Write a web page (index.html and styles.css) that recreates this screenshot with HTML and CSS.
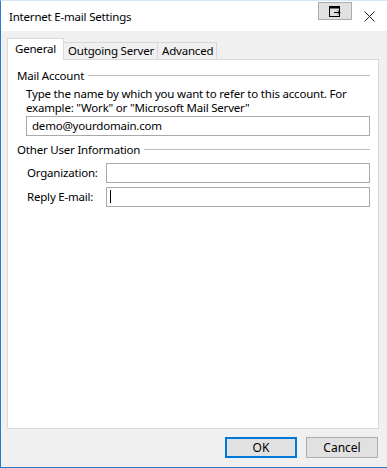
FILE: index.html
```html
<!DOCTYPE html>
<html lang="en">
<head>
    <meta charset="UTF-8">
    <title>Internet E-mail Settings</title>
    <link rel="stylesheet" href="styles.css">
</head>
<body>
    <div class="window">
        <!-- Title bar -->
        <div class="titlebar">
            <span class="title">Internet E-mail Settings</span>
            <button class="help-btn" aria-label="Help">
                <svg width="13" height="11" viewBox="0 0 13 11">
                    <rect x="0.5" y="0.5" width="10" height="10" fill="none" stroke="#000"/>
                    <rect x="0.5" y="0.5" width="10" height="2" fill="#000"/>
                    <path d="M5 6.5h6M9 4.5l2 2-2 2" fill="none" stroke="#000"/>
                </svg>
            </button>
            <span class="close">
                <svg width="11" height="11" viewBox="0 0 11 11">
                    <path d="M0.5 0.5L10.5 10.5M10.5 0.5L0.5 10.5" stroke="#222" stroke-width="1"/>
                </svg>
            </span>
        </div>

        <!-- Body -->
        <div class="content">
            <div class="tabs">
                <div class="tab active">General</div>
                <div class="tab">Outgoing Server</div>
                <div class="tab">Advanced</div>
            </div>
            <div class="panel">
                <div class="group-title"><span>Mail Account</span></div>
                <div class="group-body">
                    <p class="hint">Type the name by which you want to refer to this account. For example: "Work" or "Microsoft Mail Server"</p>
                    <div class="field wide">demo@yourdomain.com</div>
                </div>

                <div class="group-title"><span>Other User Information</span></div>
                <div class="form-grid">
                    <label>Organization:</label>
                    <div class="field"></div>
                    <label>Reply E-mail:</label>
                    <div class="field"><span class="caret"></span></div>
                </div>
            </div>
            <div class="footer">
                <button class="btn primary">OK</button>
                <button class="btn">Cancel</button>
            </div>
        </div>
    </div>
</body>
</html>
```

FILE: styles.css
```css
/* Page reset */
body {
    margin: 0;
    font-family: 'Noto Sans', 'DejaVu Sans', sans-serif;
    font-size: 11.5px;
    letter-spacing: -0.2px;
    color: #000;
    background: #fff;
}

/* Dialog frame */
.window {
    width: 387px;
    height: 468px;
    box-sizing: border-box;
    border: 1px solid #2b79c9;
    border-top-color: #d6e6f5;
    border-right: none;
    display: flex;
    flex-direction: column;
}

/* Title bar */
.titlebar {
    height: 30px;
    background: #fff;
    display: flex;
    align-items: center;
    padding-left: 8px;
}

.title {
    flex: 1;
    margin-top: 1px;
}

.help-btn {
    width: 34px;
    height: 18px;
    margin-top: -10px;
    padding: 0;
    border: 1px solid #adadad;
    background: #e1e1e1;
    display: flex;
    align-items: center;
    justify-content: center;
}

.close {
    width: 35px;
    display: flex;
    justify-content: center;
    margin-top: 1px;
}

/* Main body */
.content {
    flex: 1;
    background: #f0f0f0;
    display: flex;
    flex-direction: column;
    padding: 7px 8px 0 6px;
}

/* Tabs */
.tabs {
    display: flex;
    align-items: flex-end;
    height: 21px;
    position: relative;
    z-index: 1;
}

.tab {
    height: 17px;
    line-height: 16px;
    padding: 0 3px 0 4px;
    border: 1px solid #d9d9d9;
    border-bottom: none;
    background: #f0f0f0;
    margin-left: -1px;
    box-sizing: border-box;
}

.tab.active {
    height: 22px;
    line-height: 19px;
    background: #fff;
    margin-left: 0;
    margin-bottom: -1px;
    padding: 0 7px;
}

.panel {
    height: 370px;
    box-sizing: border-box;
    background: #fff;
    border: 1px solid #d9d9d9;
    padding: 7px 8px 0 9px;
}

/* Group box headers */
.group-title {
    display: flex;
    align-items: center;
    gap: 4px;
    height: 16px;
}

.group-title::after {
    content: "";
    flex: 1;
    border-top: 1px solid #bcbcbc;
    margin-top: 1px;
}

.group-body {
    padding: 4px 0 5px 9px;
}

.hint {
    margin: 0 0 1px;
    line-height: 14px;
}

.field {
    height: 20px;
    box-sizing: border-box;
    border: 1px solid #a9a9a9;
    background: #fff;
    padding: 0 5px;
    line-height: 18px;
}

.caret {
    display: inline-block;
    width: 1px;
    height: 13px;
    background: #000;
    vertical-align: middle;
    margin-left: -2px;
    margin-top: -2px;
}

/* Other user information rows */
.form-grid {
    display: grid;
    grid-template-columns: 79px 1fr;
    row-gap: 4px;
    padding: 6px 0 0 10px;
    align-items: center;
}

.form-grid label {
    line-height: 18px;
}

/* Dialog buttons */
.footer {
    display: flex;
    justify-content: flex-end;
    gap: 9px;
    padding-top: 8px;
    padding-right: 1px;
}

.btn {
    width: 72px;
    height: 21px;
    border: 1px solid #adadad;
    background: #e1e1e1;
    font-family: inherit;
    font-size: 12px;
    padding: 0;
}

.btn.primary {
    border: 2px solid #0078d7;
}
```
